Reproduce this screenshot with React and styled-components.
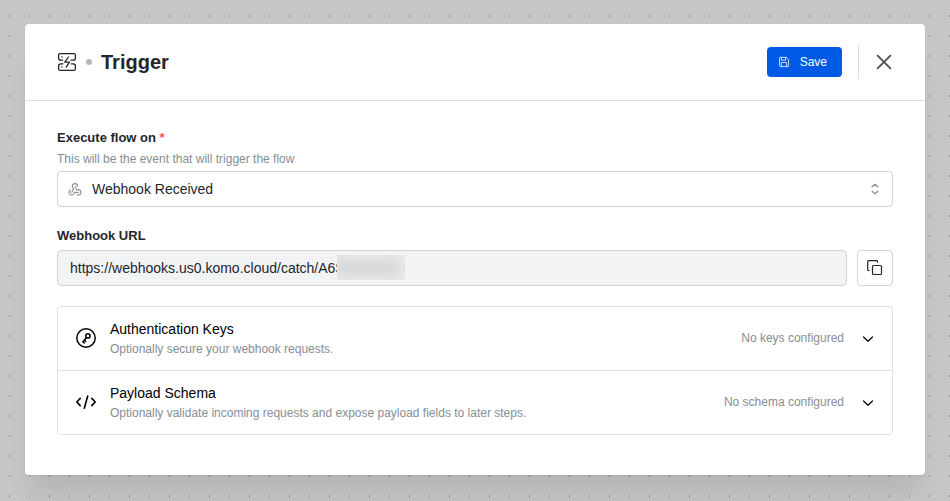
import React from "react";
import styled, { createGlobalStyle } from "styled-components";

const GlobalStyle = createGlobalStyle`
  *, *::before, *::after { box-sizing: border-box; }
  body {
    margin: 0;
    font-family: "Liberation Sans", Arial, sans-serif;
    font-size: 14px;
    color: #25262b;
  }
  button, input, select { font: inherit; color: inherit; }
`;

const Canvas = styled.div`
  min-height: 100vh;
  padding: 24px 25px 26px;
  background-color: #c5c6c8;
  background-image: conic-gradient(from 270deg at 1px 2px, #929395 90deg, transparent 0);
  background-size: 20px 20px;
  background-position: 9px 15px;
`;

const Modal = styled.section`
  background: #fff;
  border-radius: 4px;
  box-shadow: 0 1px 3px rgba(0, 0, 0, 0.05), 0 36px 28px -7px rgba(0, 0, 0, 0.05),
    0 17px 17px -7px rgba(0, 0, 0, 0.04);
`;

const Header = styled.header`
  display: flex;
  align-items: center;
  height: 77px;
  padding: 0 30px 0 32px;
  border-bottom: 1px solid #dadee3;
`;

const Dot = styled.span`
  width: 6px;
  height: 6px;
  margin: 0 9px;
  border-radius: 50%;
  background: #b3b7bb;
`;

const Title = styled.h1`
  margin: 0;
  flex: 1;
  font-size: 20px;
  line-height: 24px;
`;

const SaveButton = styled.button`
  display: flex;
  align-items: center;
  gap: 10px;
  height: 30px;
  padding: 0 15px 0 11px;
  border: 0;
  border-radius: 4px;
  background: #005ae6;
  color: #fff;
  font-size: 12px;
`;

const Divider = styled.span`
  width: 1px;
  height: 34px;
  margin: 0 14px 0 16px;
  background: #dadee3;
`;

const CloseButton = styled.button`
  display: flex;
  padding: 0;
  border: 0;
  background: none;
  color: #495057;
`;

const Body = styled.div`
  display: flex;
  flex-direction: column;
  gap: 20px;
  padding: 28px 32px 40px;
`;

const Field = styled.div`
  display: flex;
  flex-direction: column;
`;

const Label = styled.label`
  font-size: 13px;
  line-height: 18px;
  font-weight: 700;
`;

const Required = styled.span`
  color: #fa5252;
`;

const Hint = styled.p`
  margin: 0;
  padding: 5px 0;
  font-size: 12px;
  line-height: 14px;
  color: #868e96;
`;

const SelectBox = styled.div`
  position: relative;
  color: #868e96;
`;

const SelectIcon = styled.span`
  position: absolute;
  top: 0;
  bottom: 0;
  left: ${(p) => (p.$side === "left" ? "10px" : "auto")};
  right: ${(p) => (p.$side === "right" ? "11px" : "auto")};
  display: flex;
  align-items: center;
  pointer-events: none;
`;

const Select = styled.select`
  display: block;
  width: 100%;
  height: 36px;
  padding: 0 34px;
  appearance: none;
  border: 1px solid #ced4da;
  border-radius: 4px;
  background: #fff;
  color: #25262b;
`;

const UrlRow = styled.div`
  display: flex;
  gap: 10px;
  margin-top: 5px;
`;

const UrlBox = styled.div`
  position: relative;
  flex: 1;
`;

const UrlInput = styled.input`
  display: block;
  width: 100%;
  height: 36px;
  padding: 0 12px;
  border: 1px solid #ced4da;
  border-radius: 4px;
  background: #f1f3f5;
`;

const Redaction = styled.span`
  position: absolute;
  top: 5px;
  left: 280px;
  width: 68px;
  height: 25px;
  overflow: hidden;
  background: #e6e7e9;

  &::before {
    content: "";
    position: absolute;
    inset: 6px 8px 6px 0;
    background: #d5d6d8;
    filter: blur(5px);
  }
`;

const CopyButton = styled.button`
  display: flex;
  align-items: center;
  justify-content: center;
  width: 36px;
  height: 36px;
  padding: 0;
  border: 1px solid #ced4da;
  border-radius: 4px;
  background: #fff;
`;

const Accordion = styled.div`
  border: 1px solid #dee2e6;
  border-radius: 4px;
`;

const AccordionButton = styled.button`
  display: flex;
  align-items: center;
  width: 100%;
  height: 63px;
  padding: 0 16px 2px;
  border: 0;
  background: none;
  color: #000;
  text-align: left;

  & + & {
    height: 64px;
    border-top: 1px solid #dee2e6;
  }
`;

const AccordionText = styled.span`
  display: flex;
  flex-direction: column;
  flex: 1;
  margin-left: 12px;
  padding-top: 2px;
  line-height: 20px;
`;

const Muted = styled.span`
  font-size: 12px;
  color: #868e96;
`;

const Status = styled(Muted)`
  margin-right: 16px;
`;

const Icon = ({ size = 24, box = 24, weight = 2, children }) => (
  <svg
    width={size}
    height={size}
    viewBox={`0 0 ${box} ${box}`}
    fill="none"
    stroke="currentColor"
    strokeWidth={weight}
    strokeLinecap="round"
    strokeLinejoin="round"
    aria-hidden="true"
  >
    {children}
  </svg>
);

const TriggerIcon = () => (
  <Icon size={20} box={20} weight={1.3}>
    <path d="M5.6 8.2H4C2.4 8.2 1.6 7.3 1.6 6V3.2Q1.6 1.6 3.2 1.6H16.8Q18.4 1.6 18.4 3.2V6C18.4 7.5 17.6 8.2 16.2 8.2H14" />
    <path d="M6 11.8H4C2.4 11.8 1.6 12.5 1.6 14V16.8Q1.6 18.4 3.2 18.4H16.8Q18.4 18.4 18.4 16.8V14C18.4 12.7 17.8 11.8 16.2 11.8H14.4" />
    <path d="M11.4 5L7.8 10.1H12.4L9.2 15.2" />
    <path d="M4.9 5H5M4.9 15H5" />
  </Icon>
);

const SaveIcon = () => (
  <Icon size={12} box={12} weight={0.8}>
    <path d="M1.5 2Q1.5 1.3 2.2 1.3H8.2L10.6 3.7V9.9Q10.6 10.6 9.9 10.6H2.2Q1.5 10.6 1.5 9.9Z" />
    <path d="M3.4 1.5V4.2H7.6V1.5M3.4 10.4V6.5H8.6V10.4" />
  </Icon>
);

const WebhookIcon = () => (
  <Icon size={16} weight={1.7}>
    <path d="M4.876 13.61a4 4 0 1 0 6.124 3.39h6" />
    <path d="M15.066 20.502a4 4 0 1 0 1.934 -7.502c-.706 0 -1.424 .179 -2 .5l-3 -5.5" />
    <path d="M16 8a4 4 0 1 0 -8 0c0 1.506 .77 2.818 2 3.5l-3 5.5" />
  </Icon>
);

const SelectorIcon = () => (
  <Icon size={14} box={14} weight={1.2}>
    <path d="M4.1 4.8L7 2.3L9.9 4.8M4.1 9.2L7 11.7L9.9 9.2" />
  </Icon>
);

const CloseIcon = () => (
  <Icon size={22} box={22} weight={1.8}>
    <path d="M4.6 4.6L17.4 17.4M17.4 4.6L4.6 17.4" />
  </Icon>
);

const CopyIcon = () => (
  <Icon size={16} box={16} weight={1.2}>
    <rect x="5.5" y="5.5" width="9" height="9" rx="1" />
    <path d="M2.2 10.5H1.5Q0.7 10.5 0.7 9.7V1.5Q0.7 0.7 1.5 0.7H9.7Q10.5 0.7 10.5 1.5V2.2" />
  </Icon>
);

const KeyIcon = () => (
  <Icon size={24} box={24} weight={1.5}>
    <circle cx="12" cy="12" r="9.2" />
    <circle cx="13.9" cy="9.9" r="2.1" />
    <path d="M12.5 11.6L8.8 15.9L10.3 17M10.2 14.3L11.7 15.4" />
  </Icon>
);

const CodeIcon = () => (
  <Icon size={24} box={24} weight={1.6}>
    <path d="M6.2 8.4L2.8 12L6.2 15.6M17.8 8.4L21.2 12L17.8 15.6M13.7 6L10.3 18.2" />
  </Icon>
);

const ChevronIcon = () => (
  <Icon size={16} box={16} weight={1.2}>
    <path d="M3.5 7L8 11.2L12.5 7" />
  </Icon>
);

const sections = [
  {
    title: "Authentication Keys",
    text: "Optionally secure your webhook requests.",
    status: "No keys configured",
    Glyph: KeyIcon,
  },
  {
    title: "Payload Schema",
    text: "Optionally validate incoming requests and expose payload fields to later steps.",
    status: "No schema configured",
    Glyph: CodeIcon,
  },
];

export default function App() {
  return (
    <>
      <GlobalStyle />
      <Canvas>
        <Modal role="dialog" aria-labelledby="dialog-title">
          <Header>
            <TriggerIcon />
            <Dot />
            <Title id="dialog-title">Trigger</Title>
            <SaveButton type="button">
              <SaveIcon />
              Save
            </SaveButton>
            <Divider />
            <CloseButton type="button" aria-label="Close">
              <CloseIcon />
            </CloseButton>
          </Header>
          <Body>
            <Field>
              <Label htmlFor="event">
                Execute flow on <Required>*</Required>
              </Label>
              <Hint>This will be the event that will trigger the flow</Hint>
              <SelectBox>
                <Select id="event" defaultValue="webhook">
                  <option value="webhook">Webhook Received</option>
                </Select>
                <SelectIcon $side="left">
                  <WebhookIcon />
                </SelectIcon>
                <SelectIcon $side="right">
                  <SelectorIcon />
                </SelectIcon>
              </SelectBox>
            </Field>
            <Field>
              <Label htmlFor="url">Webhook URL</Label>
              <UrlRow>
                <UrlBox>
                  <UrlInput id="url" readOnly value="https://webhooks.us0.komo.cloud/catch/A6S" />
                  <Redaction />
                </UrlBox>
                <CopyButton type="button" aria-label="Copy webhook URL">
                  <CopyIcon />
                </CopyButton>
              </UrlRow>
            </Field>
            <Accordion>
              {sections.map(({ title, text, status, Glyph }) => (
                <AccordionButton key={title} type="button" aria-expanded="false">
                  <Glyph />
                  <AccordionText>
                    <span>{title}</span>
                    <Muted>{text}</Muted>
                  </AccordionText>
                  <Status>{status}</Status>
                  <ChevronIcon />
                </AccordionButton>
              ))}
            </Accordion>
          </Body>
        </Modal>
      </Canvas>
    </>
  );
}
